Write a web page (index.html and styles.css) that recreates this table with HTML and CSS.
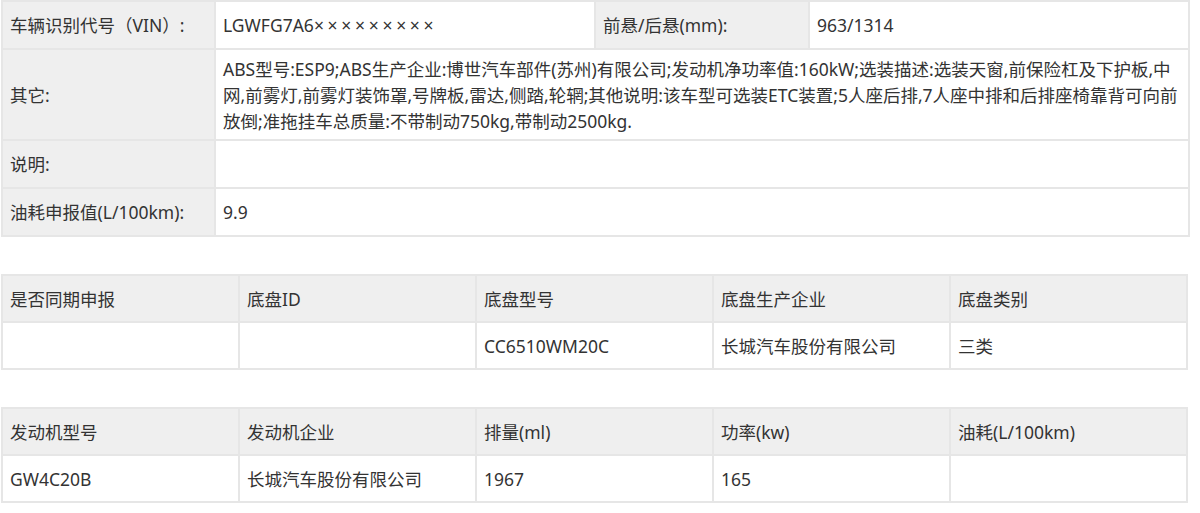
FILE: index.html
```html
<!DOCTYPE html>
<html lang="zh-CN">
<head>
<meta charset="utf-8">
<title>车辆参数</title>
<link rel="stylesheet" href="styles.css">
</head>
<body>
<div class="page">
  <table class="grid info">
    <colgroup>
      <col class="c-l1"><col class="c-v1"><col class="c-l2"><col class="c-v2">
    </colgroup>
    <tr>
      <td class="lab">车辆识别代号（VIN）:</td>
      <td>LGWFG7A6<span class="mask">×××××××××</span></td>
      <td class="lab">前悬/后悬(mm):</td>
      <td>963/1314</td>
    </tr>
    <tr>
      <td class="lab">其它:</td>
      <td colspan="3" class="multi">ABS型号:ESP9;ABS生产企业:博世汽车部件(苏州)有限公司;发动机净功率值:160kW;选装描述:选装天窗,前保险杠及下护板,中网,前雾灯,前雾灯装饰罩,号牌板,雷达,侧踏,轮辋;其他说明:该车型可选装ETC装置;5人座后排,7人座中排和后排座椅靠背可向前放倒;准拖挂车总质量:不带制动750kg,带制动2500kg.</td>
    </tr>
    <tr>
      <td class="lab">说明:</td>
      <td colspan="3"></td>
    </tr>
    <tr>
      <td class="lab">油耗申报值(L/100km):</td>
      <td colspan="3">9.9</td>
    </tr>
  </table>

  <table class="grid five">
    <tr class="head">
      <td>是否同期申报</td>
      <td>底盘ID</td>
      <td>底盘型号</td>
      <td>底盘生产企业</td>
      <td>底盘类别</td>
    </tr>
    <tr>
      <td></td>
      <td></td>
      <td>CC6510WM20C</td>
      <td>长城汽车股份有限公司</td>
      <td>三类</td>
    </tr>
  </table>

  <table class="grid five">
    <tr class="head">
      <td>发动机型号</td>
      <td>发动机企业</td>
      <td>排量(ml)</td>
      <td>功率(kw)</td>
      <td>油耗(L/100km)</td>
    </tr>
    <tr>
      <td>GW4C20B</td>
      <td>长城汽车股份有限公司</td>
      <td>1967</td>
      <td>165</td>
      <td></td>
    </tr>
  </table>
</div>
</body>
</html>
```

FILE: styles.css
```css
* { box-sizing: border-box; }

html, body {
  margin: 0;
  padding: 0;
  background: #fff;
}

body {
  font-family: "Noto Sans", "Noto Sans CJK SC", sans-serif;
  font-size: 17.5px;
  color: #333;
}

.page {
  padding: 0 12px 0 1px;
  display: flex;
  flex-direction: column;
  gap: 37px;
}

.grid {
  width: 1187px;
  border-collapse: collapse;
  table-layout: fixed;
  border: 2px solid #e6e6e6;
}

.grid td {
  border: 2px solid #e6e6e6;
  padding: 8px 7px;
  height: 47px;
  line-height: 26px;
  vertical-align: middle;
  word-break: break-all;
}

.info td { height: 48px; }

.info .c-l1 { width: 213px; }
.info .c-v1 { width: 380px; }
.info .c-l2 { width: 214px; }
.info .c-v2 { width: 380px; }

.mask {
  letter-spacing: 3.7px;
}

.lab {
  background: #efefef;
}

.info td.multi {
  height: auto;
  padding-top: 6px;
  padding-bottom: 5px;
}

.head td {
  background: #efefef;
}
```
